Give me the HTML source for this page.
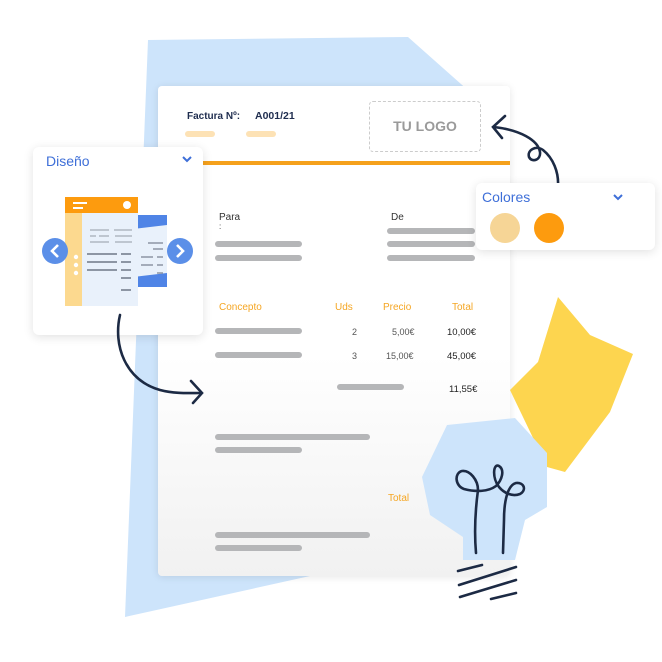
<!DOCTYPE html>
<html><head><meta charset="utf-8"><style>
*{margin:0;padding:0;box-sizing:border-box}
body{width:662px;height:662px;background:#fff;position:relative;overflow:hidden;font-family:"Liberation Sans",Arial,sans-serif}
.a{position:absolute}
.bar{position:absolute;height:6px;border-radius:3px;background:#b5b6b8}
.t{position:absolute;font-size:10px;white-space:nowrap}
.o{color:#f5a623}
.card{position:absolute;background:#fff;border-radius:6px;box-shadow:0 2px 10px rgba(0,0,0,.12)}
</style></head><body>
<svg class="a" style="left:0;top:0" width="662" height="662">
<polygon points="148,40 408,37 470,92 470,570 310,576 125,617" fill="#cde4fb"/>
</svg>
<div class="a" style="left:158px;top:86px;width:352px;height:490px;border-radius:4px;background:linear-gradient(#fff 0%,#fff 55%,#f1f1f1 100%);box-shadow:0 1px 8px rgba(0,0,0,.1)"></div>
<div class="t" style="left:187px;top:111px;font-weight:bold;color:#1f2d4f;font-size:10px">Factura Nº:</div>
<div class="t" style="left:255px;top:110px;font-weight:bold;color:#1f2d4f;font-size:10.5px">A001/21</div>
<div class="a" style="left:185px;top:131px;width:30px;height:6px;border-radius:3px;background:#fde2b5"></div>
<div class="a" style="left:246px;top:131px;width:30px;height:6px;border-radius:3px;background:#fde2b5"></div>
<div class="a" style="left:369px;top:101px;width:112px;height:51px;border:1px dashed #ccc;border-radius:4px;color:#9a9a9a;font-weight:bold;font-size:14px;text-align:center;line-height:49px">TU LOGO</div>
<div class="a" style="left:200px;top:161px;width:310px;height:4px;background:#f5a11c"></div>
<div class="t" style="left:219px;top:212px;color:#333">Para</div>
<div class="t" style="left:219px;top:222px;color:#333;font-size:8px">:</div>
<div class="t" style="left:391px;top:212px;color:#333">De</div>
<div class="bar" style="left:215px;top:241px;width:87px"></div>
<div class="bar" style="left:215px;top:255px;width:87px"></div>
<div class="bar" style="left:387px;top:228px;width:88px"></div>
<div class="bar" style="left:387px;top:241px;width:88px"></div>
<div class="bar" style="left:387px;top:255px;width:88px"></div>
<div class="t o" style="left:219px;top:302px">Concepto</div>
<div class="t o" style="left:335px;top:302px">Uds</div>
<div class="t o" style="left:383px;top:302px">Precio</div>
<div class="t o" style="left:452px;top:302px">Total</div>
<div class="bar" style="left:215px;top:328px;width:87px"></div>
<div class="bar" style="left:215px;top:352px;width:87px"></div>
<div class="t" style="left:352px;top:327px;color:#555;font-size:9px">2</div>
<div class="t" style="left:392px;top:327px;color:#555;font-size:9px">5,00€</div>
<div class="t" style="left:447px;top:327px;color:#222;font-size:9.5px">10,00€</div>
<div class="t" style="left:352px;top:351px;color:#555;font-size:9px">3</div>
<div class="t" style="left:386px;top:351px;color:#555;font-size:9px">15,00€</div>
<div class="t" style="left:447px;top:351px;color:#222;font-size:9.5px">45,00€</div>
<div class="bar" style="left:337px;top:384px;width:67px"></div>
<div class="t" style="left:449px;top:384px;color:#222;font-size:9.5px">11,55€</div>
<div class="bar" style="left:215px;top:434px;width:155px"></div>
<div class="bar" style="left:215px;top:447px;width:87px"></div>
<div class="t o" style="left:388px;top:493px">Total</div>
<div class="bar" style="left:215px;top:532px;width:155px"></div>
<div class="bar" style="left:215px;top:545px;width:87px"></div>

<svg class="a" style="left:0;top:0" width="662" height="662">
<polygon points="558,297 590,335 633,354 610,412 565,472 547,467 510,390 538,362" fill="#fdd54f"/>
<polygon points="447,425 515,418 547,453 547,507 525,520 515,560 463,560 463,537 430,515 422,477" fill="#cde4fb"/>
<g fill="none" stroke="#1c2a44" stroke-width="2.6" stroke-linecap="round">
<path d="M476,553 C474,530 476,505 478,490 C478,480 470,470 462,471 C454,473 455,486 464,489 C475,492 488,492 496,486 C502,480 505,470 499,466 C493,463 492,478 499,487 C504,493 512,497 520,494 C527,490 524,482 516,483 C508,485 504,500 504,520 L503,553"/>
<path d="M458,571 L482,565 M459,585 L516,567 M460,597 L516,580 M491,599 L516,593"/>
<path d="M558,187 C559,172 553,158 543,150 C536,145 527,150 529,157 C532,163 541,160 540,152 C538,140 520,130 494,127 M505,116 L493,127 L502,138"/>
<path d="M191,381 L202,393 L193,403"/>
</g>
</svg>

<div class="card" style="left:476px;top:183px;width:179px;height:67px">
<div class="t" style="left:6px;top:6px;font-size:14px;color:#3e6fd8">Colores</div>
<svg class="a" style="left:136px;top:10px" width="12" height="8"><path d="M2,2 L6,6 L10,2" fill="none" stroke="#3e6fd8" stroke-width="2"/></svg>
<div class="a" style="left:14px;top:30px;width:30px;height:30px;border-radius:50%;background:#f6d596"></div>
<div class="a" style="left:58px;top:30px;width:30px;height:30px;border-radius:50%;background:#fd9b0e"></div>
</div>

<div class="card" style="left:33px;top:147px;width:170px;height:188px">
<div class="t" style="left:13px;top:6px;font-size:14px;color:#3e6fd8">Diseño</div>
<svg class="a" style="left:148px;top:8px" width="12" height="8"><path d="M2,2 L6,6 L10,2" fill="none" stroke="#3e6fd8" stroke-width="2"/></svg>
<svg class="a" style="left:0;top:0" width="170" height="188">
<rect x="100" y="68" width="34" height="72" fill="#e9f1fb"/>
<polygon points="100,68 134,68 134,78 100,82" fill="#4f84e6"/>
<polygon points="100,130 134,126 134,140 100,140" fill="#4f84e6"/>
<g stroke="#8d96a4" stroke-width="1.5"><path d="M108,110 H120 M124,110 H130 M108,118 H120 M124,118 H130 M124,126 H130 M115,96 H130 M120,102 H130"/></g>
<rect x="32" y="50" width="73" height="109" fill="#e9f1fb"/>
<rect x="32" y="50" width="17" height="109" fill="#fcd98f"/>
<rect x="32" y="50" width="73" height="16" fill="#fd9b0e"/>
<circle cx="94" cy="58" r="4" fill="#fff"/>
<rect x="40" y="55" width="14" height="2" fill="#fff"/><rect x="40" y="60" width="10" height="2" fill="#fff"/>
<g fill="#fff"><circle cx="43" cy="110" r="2.2"/><circle cx="43" cy="118" r="2.2"/><circle cx="43" cy="126" r="2.2"/></g>
<g stroke="#8d96a4" stroke-width="2"><path d="M54,107 H84 M54,115 H84 M54,123 H84 M88,107 H98 M88,115 H98 M88,123 H98 M88,131 H98 M88,143 H98"/></g>
<g stroke="#b0b7c2" stroke-width="1.5"><path d="M57,83 H76 M81,83 H99 M57,89 H63 M66,89 H76 M82,89 H99 M57,95 H76 M82,95 H99"/></g>
<circle cx="22" cy="104" r="13" fill="#5b8fe8"/>
<circle cx="147" cy="104" r="13" fill="#5b8fe8"/>
<path d="M25,98 L19,104 L25,110 M144,98 L150,104 L144,110" fill="none" stroke="#fff" stroke-width="2.6"/>
</svg>
</div>
<svg class="a" style="left:0;top:0" width="662" height="662"><path d="M120,315 C113,345 125,380 160,390 C175,394 190,393 200,393" fill="none" stroke="#1c2a44" stroke-width="2.6" stroke-linecap="round"/></svg>
</body></html>
